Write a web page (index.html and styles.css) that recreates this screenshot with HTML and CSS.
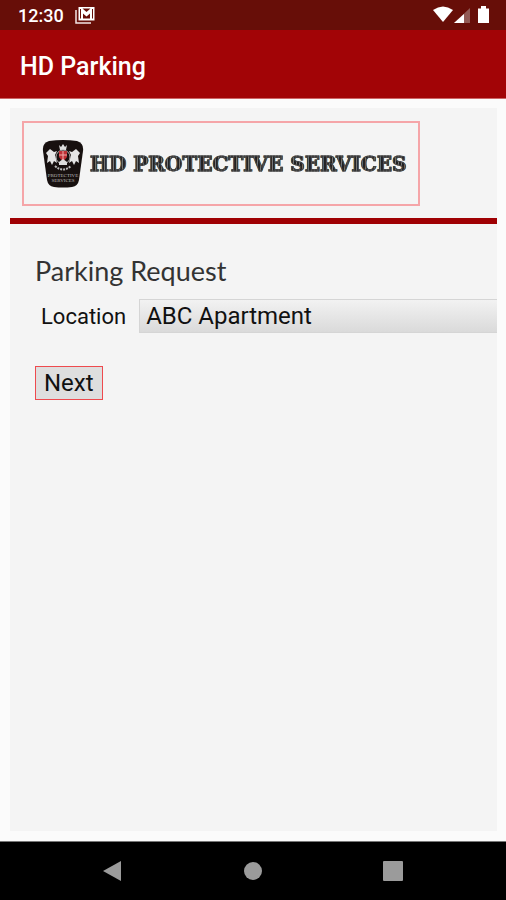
FILE: index.html
```
<!DOCTYPE html>
<html lang="en">
<head>
    <meta charset="UTF-8">
    <meta name="viewport" content="width=device-width, initial-scale=1.0">
    <title>HD Parking</title>
    <link rel="stylesheet" href="styles.css">
</head>
<body>
    <div class="status-bar">
        <span class="time">12:30</span>
        <svg class="mail-icon" width="20" height="17" viewBox="0 0 20 17">
            <path d="M1 3v13H16" fill="none" stroke="#f3e6e5" stroke-width="1.500"/>
            <path d="M3.500 0h16v13.500h-16z" fill="#fff"/>
            <path d="M7.500 1.500h8l-4 3.500z" fill="#670e08"/>
            <path d="M8 11.500V6.500l3.500 3 3.500-3v5z" fill="#670e08"/>
            <path d="M5.500 2v9.500M17.500 2v9.500" stroke="#670e08"/>
        </svg>
        <svg class="signal-icons" width="58" height="18" viewBox="0 0 58 18">
            <path d="M1 4Q11 -3 21 4L11 16z" fill="#fff"/>
            <path d="M22 17L38 2v15z" fill="#925a55"/>
            <path d="M22 17L32 8v9z" fill="#fff"/>
            <path d="M46 2.500h3V0h5v2.500h3V17H46z" fill="#fff"/>
        </svg>
    </div>
    <header class="app-bar">
        <h1>HD Parking</h1>
    </header>

    <main class="content">
        <div class="card">
            <div class="banner-row">
                <div class="banner">
                    <svg class="badge" width="42" height="48" viewBox="0 0 42 48">
                        <path d="M7 1Q21 -1 35 1Q42 3 41 11L37 40Q36 46 30 47Q21 48 12 47Q6 46 5 40L1 11Q0 3 7 1z" fill="#17100f"/>
                        <path d="M17 5l2 2 2-3 2 3 2-2-1 5h-6z" fill="#ddd"/>
                        <circle cx="21" cy="17" r="7" fill="none" stroke="#aaa"/>
                        <path d="M17 11h8v6l-4 5-4-5z" fill="#bd3035"/>
                        <path d="M21 11v10M17 15h8" stroke="#eaa"/>
                        <path d="M4 13l4-4 4 3 3-1-2 4 2 8-3-2-2 4-2-4-3 2 1-7z" fill="#e5e5e5"/>
                        <path d="M38 13l-4-4-4 3-3-1 2 4-2 8 3-2 2 4 2-4 3 2-1-7z" fill="#e5e5e5"/>
                        <path d="M17 22l4-3 4 3v3h-8z" fill="#ddd"/>
                        <path d="M13 26q8 7 16 0" fill="none" stroke="#bbb" stroke-width="2" stroke-dasharray="2 1"/>
                        <text class="badge-text" x="21" y="37" text-anchor="middle">PROTECTIVE</text>
                        <text class="badge-text" x="21" y="42" text-anchor="middle">SERVICES</text>
                    </svg>
                    <span class="banner-text">HD PROTECTIVE SERVICES</span>
                </div>
            </div>
            <form class="request-form">
                <h2>Parking Request</h2>
                <div class="field">
                    <label for="location">Location</label>
                    <select id="location" name="location">
                        <option>ABC Apartment</option>
                    </select>
                </div>
                <button type="button" class="next-btn">Next</button>
            </form>
        </div>
    </main>

    <nav class="nav-bar">
        <button type="button" aria-label="Back">
            <svg width="20" height="22" viewBox="0 0 20 22"><path d="M0 11L18 1v20z" fill="#9b9b9b"/></svg>
        </button>
        <button type="button" aria-label="Home">
            <svg width="20" height="22" viewBox="0 0 20 22"><circle cx="10" cy="11" r="9" fill="#9b9b9b"/></svg>
        </button>
        <button type="button" aria-label="Recent apps">
            <svg width="20" height="22" viewBox="0 0 20 22"><rect y="1" width="20" height="20" rx="1" fill="#9b9b9b"/></svg>
        </button>
    </nav>
</body>
</html>
```

FILE: styles.css
```
* {
    margin: 0;
    padding: 0;
    box-sizing: border-box;
}

body {
    display: flex;
    flex-direction: column;
    min-height: 100vh;
    background: #fbfbfb;
    color: #111;
    font-family: Roboto, "Liberation Sans", sans-serif;
}

.status-bar {
    display: flex;
    align-items: center;
    height: 30px;
    padding: 0 16px 0 18px;
    background: #670e08;
    color: #fff;
}

.time {
    font-size: 18px;
    font-weight: 500;
}

.mail-icon {
    margin-left: 11px;
}

.signal-icons {
    margin-left: auto;
}

.app-bar {
    display: flex;
    align-items: center;
    height: 69px;
    padding: 4px 20px 0;
    border-bottom: 1px solid #c66;
    background: #a20406;
    color: #fff;
}

.app-bar h1 {
    font-size: 25px;
    font-weight: 500;
}

.content {
    display: flex;
    flex: 1;
    padding: 9px 9px 10px 10px;
}

.card {
    flex: 1;
    min-width: 0;
    overflow: hidden;
    background: #f4f4f4;
}

.banner-row {
    padding: 13px 12px 12px;
    border-bottom: 6px solid #9f0003;
}

.banner {
    display: flex;
    align-items: center;
    gap: 6px;
    width: fit-content;
    height: 85px;
    padding: 0 12px 0 18px;
    border: 2px solid #f5a5a8;
}

/* engraved look: pale hairlines through the dark letters */
.banner-text {
    background: repeating-linear-gradient(90deg, #222 0 2px, #777 2px 3px);
    background-clip: text;
    -webkit-background-clip: text;
    -webkit-text-stroke: 1px #444;
    color: transparent;
    font-family: "DejaVu Serif", serif;
    font-size: 20px;
    font-weight: 700;
    white-space: nowrap;
}

.badge-text {
    fill: #bbb;
    font-family: "Liberation Serif", serif;
    font-size: 5px;
}

.request-form {
    padding: 30px 0 0 25px;
}

.request-form h2 {
    color: #333;
    font-family: Lato, sans-serif;
    font-size: 27px;
    font-weight: 400;
    line-height: 34px;
}

.field {
    display: flex;
    align-items: center;
    gap: 13px;
    margin-top: 11px;
    padding-left: 6px;
}

.field label {
    font-size: 22px;
}

.field select {
    flex: 1;
    height: 34px;
    padding-left: 6px;
    border: 1px solid #d5d5d5;
    border-right: none;
    border-radius: 0;
    appearance: none;
    background: linear-gradient(#f2f2f2, #dadada);
    color: #111;
    font-family: inherit;
    font-size: 24px;
    line-height: 32px;
}

.next-btn {
    height: 34px;
    margin-top: 33px;
    padding: 0 8px;
    border: 1px solid #ee4a4e;
    background: #dedede;
    color: #111;
    font-family: inherit;
    font-size: 24px;
    line-height: 30px;
}

.nav-bar {
    display: flex;
    justify-content: center;
    gap: 100px;
    height: 59px;
    border-top: 1px solid #777;
    background: #000;
}

.nav-bar button {
    display: flex;
    align-items: center;
    justify-content: center;
    width: 40px;
    border: none;
    background: none;
}
```
